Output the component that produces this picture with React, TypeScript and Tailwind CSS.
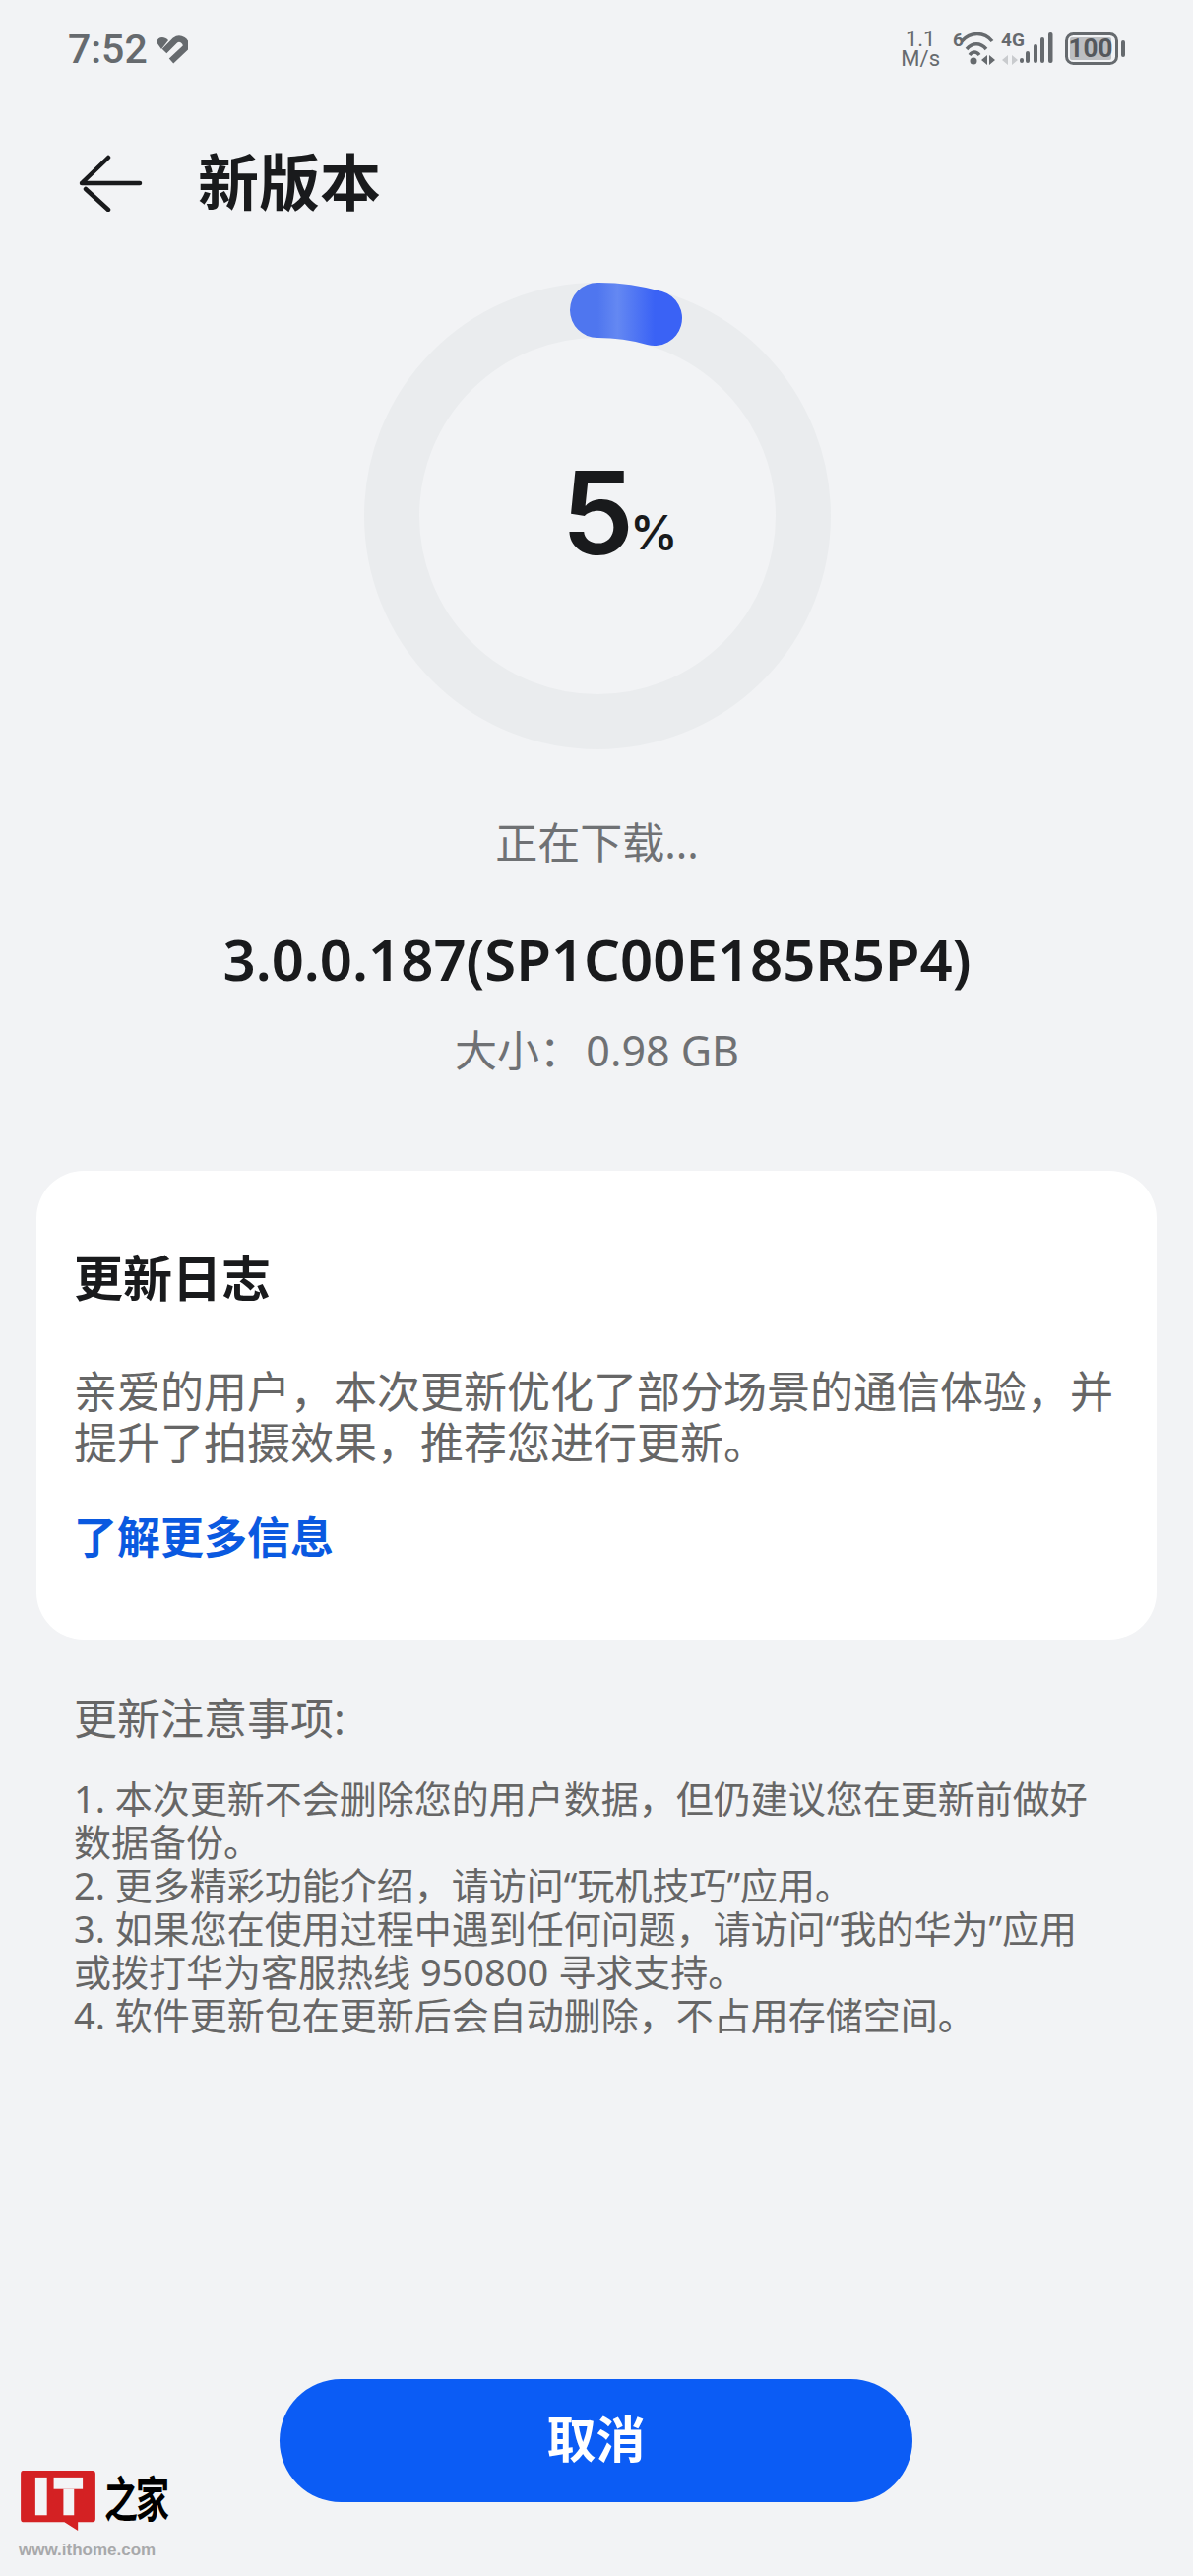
const FONT = "font-['Noto_Sans','Noto_Sans_CJK_SC',sans-serif]"

function StatusBar() {
  return (
    <div className="flex h-[100px] items-center justify-between pl-[69px] pr-[62px]">
      <div className="flex items-center gap-[7px]">
        <span className="font-['Roboto',sans-serif] text-[41px] font-medium leading-none text-[#666a6e]">7:52</span>
        <svg width="34" height="30" viewBox="8 7 34 30" className="mt-[-1px]">
          <path d="M10 15C11 10 17 8 22 13L15 22Z" fill="#666a6e" />
          <path d="M18 24L29 13C34 9 41 14 40 20L25 34" fill="none" stroke="#666a6e" strokeWidth="6.5" />
        </svg>
      </div>
      <div className="flex items-center text-[#666a6e]">
        <div className="mr-[5px] text-center font-['Roboto',sans-serif] text-[22px] leading-[20px]">
          <div>1.1</div>
          <div>M/s</div>
        </div>
        <svg width="190" height="50" viewBox="960 25 190 50">
          <text x="968" y="47" fontFamily="Roboto" fontWeight="700" fontSize="19" fill="#666a6e">6</text>
          <path d="M977 42C986 32 1000 32 1008 42" stroke="#666a6e" strokeWidth="3.5" fill="none" />
          <path d="M982 50C988 43 996 43 1002 50" stroke="#666a6e" strokeWidth="3.5" fill="none" />
          <path d="M985 56C988 52 992 52 995 56" stroke="#666a6e" strokeWidth="3.5" fill="none" />
          <circle cx="989" cy="62" r="3.5" fill="#666a6e" />
          <path d="M1003 56L997 61L1003 66ZM1005 56L1011 61L1005 66Z" fill="#666a6e" />
          <text x="1017" y="47" fontFamily="Roboto" fontWeight="700" fontSize="19" fill="#666a6e">4G</text>
          <path d="M1024 56L1018 61L1024 66ZM1028 56L1034 61L1028 66Z" fill="#c9cbce" />
          <rect x="1036" y="59" width="4" height="5" rx="2" fill="#666a6e" />
          <rect x="1042" y="52" width="4" height="12" rx="2" fill="#666a6e" />
          <rect x="1050" y="45" width="4" height="19" rx="2" fill="#666a6e" />
          <rect x="1057" y="38" width="4" height="26" rx="2" fill="#666a6e" />
          <rect x="1065" y="33" width="4.5" height="31" rx="2" fill="#666a6e" />
          <rect x="1083.5" y="34.5" width="51" height="30" rx="7" fill="none" stroke="#666a6e" strokeWidth="3" />
          <rect x="1087" y="38" width="42" height="23" rx="2" fill="#bcbec1" />
          <text x="1108" y="58" textAnchor="middle" fontFamily="Roboto" fontWeight="700" fontSize="26" fill="#55585c">100</text>
          <rect x="1139" y="41" width="4" height="17" rx="2" fill="#666a6e" />
        </svg>
      </div>
    </div>
  )
}

function ProgressRing() {
  return (
    <div className="relative h-[474px] w-[474px]">
      <svg width="474" height="474" viewBox="0 0 474 474" className="block">
        <defs>
          <linearGradient id="arc" x1="0" y1="0" x2="1" y2="0">
            <stop offset="0" stopColor="#4f76ef" />
            <stop offset="0.35" stopColor="#6488f2" />
            <stop offset="1" stopColor="#3a62f5" />
          </linearGradient>
        </defs>
        <circle cx="237" cy="237" r="209" fill="none" stroke="#eaecee" strokeWidth="56" />
        <path d="M237 28A209 209 0 0 1 295 36" fill="none" stroke="url(#arc)" strokeWidth="56" strokeLinecap="round" />
      </svg>
      <div className="absolute inset-0 flex items-center justify-center pb-[8px] pl-[46px]">
        <span className="font-['Inter',sans-serif] text-[117px] font-semibold leading-none text-[#191a1c]">5</span>
        <span className="ml-[-4px] mt-[42px] font-['Inter',sans-serif] text-[48px] font-semibold leading-none text-[#191a1c]">%</span>
      </div>
    </div>
  )
}

function ItHomeLogo() {
  return (
    <div className="absolute bottom-[18px] left-[19px] flex w-[156px] flex-col">
      <div className="flex h-[62px] items-start gap-[9px] pl-[2px]">
        <svg width="76" height="62" viewBox="0 0 77 63" className="shrink-0">
          <path d="M2 0H74C76 0 77 1 77 3V50C77 52 76 53 74 53H59V62L45 53H2C1 53 0 52 0 50V3C0 1 1 0 2 0Z" fill="#d42123" />
          <rect x="15" y="7" width="12" height="39" fill="#f3f4f6" />
          <rect x="34" y="7" width="30" height="12" fill="#f3f4f6" />
          <rect x="44" y="19" width="11" height="27" fill="#f3f4f6" />
        </svg>
        <span className="mt-[2px] origin-top scale-y-[1.45] font-['Noto_Sans_CJK_SC',serif] text-[34px] font-bold leading-none tracking-[-2px] whitespace-nowrap text-black">之家</span>
      </div>
      <span className="mt-[10px] font-['Liberation_Sans',sans-serif] text-[17px] font-bold leading-none text-[#a8a9ab]">www.ithome.com</span>
    </div>
  )
}

export default function App() {
  return (
    <div className={`relative flex h-[2616px] w-[1212px] flex-col overflow-hidden bg-[#f2f3f5] ${FONT}`}>
      <StatusBar />
      <div className="mt-[41px] flex h-[88px] items-center pl-[79px]">
        <svg width="66" height="60" viewBox="0 0 66 60">
          <path d="M4 31H63M31 5L5 30M8 37L31 58" fill="none" stroke="#191a1c" strokeWidth="4.5" strokeLinecap="round" />
        </svg>
        <h1 className="ml-[56px] text-[62px] font-bold leading-none text-[#191a1c]">新版本</h1>
      </div>
      <div className="mt-[58px] flex flex-col items-center pl-[1px]">
        <ProgressRing />
        <p className="mt-[73px] text-[43px] leading-none text-[#6f7174]">正在下载...</p>
        <p className="mt-[68px] text-[58px] font-semibold leading-none text-[#191a1c]">3.0.0.187(SP1C00E185R5P4)</p>
        <p className="mt-[42px] text-[43px] leading-none whitespace-pre text-[#6f7174]">大小：{'\u200a'}0.98 GB</p>
      </div>
      <section className="mx-[37px] mt-[101px] h-[476px] rounded-[48px] bg-white px-[38px] pt-[84px]">
        <h2 className="text-[50px] font-bold leading-none text-[#191a1c]">更新日志</h2>
        <p className="mt-[64px] text-[44px] leading-[52px] text-[#666666]">亲爱的用户，本次更新优化了部分场景的通信体验，并提升了拍摄效果，推荐您进行更新。</p>
        <p className="mt-[48px] text-[44px] font-bold leading-none text-[#0a59e0]">了解更多信息</p>
      </section>
      <section className="mt-[58px] pl-[75px] pr-[97px] text-[#666666]">
        <h3 className="text-[44px] leading-none">更新注意事项:</h3>
        <div className="mt-[37px] text-[38px] leading-[44px]">
          <p>1. 本次更新不会删除您的用户数据，但仍建议您在更新前做好数据备份。</p>
          <p>2. 更多精彩功能介绍，请访问“玩机技巧”应用。</p>
          <p>3. 如果您在使用过程中遇到任何问题，请访问“我的华为”应用或拨打华为客服热线 950800 寻求支持。</p>
          <p>4. 软件更新包在更新后会自动删除，不占用存储空间。</p>
        </div>
      </section>
      <button className="absolute bottom-[75px] left-[284px] h-[125px] w-[643px] rounded-full bg-[#0b5cf5] pb-[2px] text-[50px] font-bold text-white">取消</button>
      <ItHomeLogo />
    </div>
  )
}
